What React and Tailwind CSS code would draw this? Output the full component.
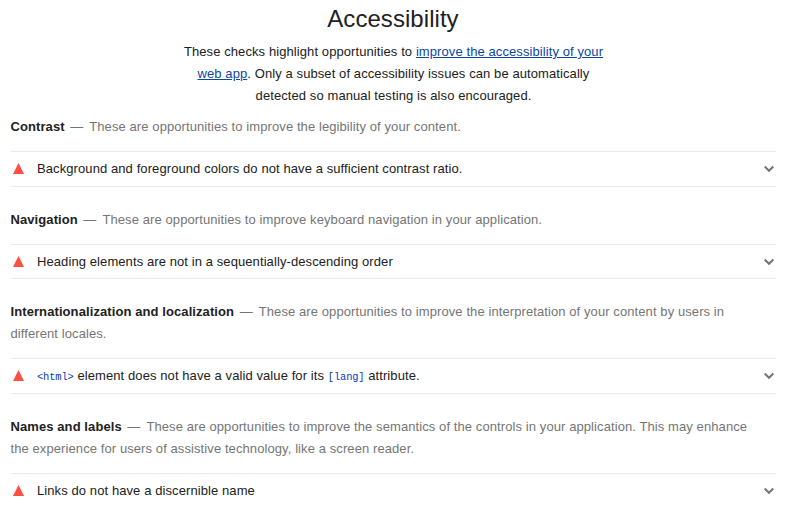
const sections = [
  { title: 'Contrast', desc: 'These are opportunities to improve the legibility of your content.', item: 'Background and foreground colors do not have a sufficient contrast ratio.', h: 'h-[36px]', mt: '' },
  { title: 'Navigation', desc: 'These are opportunities to improve keyboard navigation in your application.', item: 'Heading elements are not in a sequentially-descending order', h: 'h-[35px]', mt: 'mt-[22px]' },
  {
    title: 'Internationalization and localization',
    desc: 'These are opportunities to improve the interpretation of your content by users in different locales.',
    item: (
      <>
        <Code>{'<html>'}</Code> element does not have a valid value for its <Code>[lang]</Code> attribute.
      </>
    ),
    h: 'h-[36px]', mt: 'mt-[22px]',
  },
  { title: 'Names and labels', desc: 'These are opportunities to improve the semantics of the controls in your application. This may enhance the experience for users of assistive technology, like a screen reader.', item: 'Links do not have a discernible name', h: 'h-[36px]', mt: 'mt-[22px]' },
];

function Code({ children }) {
  return <code className="font-['Liberation_Mono',monospace] text-[10.4px] leading-none tracking-[-0.12px] text-[#0938c2]">{children}</code>;
}

function Section({ title, desc, item, h, mt }) {
  return (
    <section className={mt}>
      <p className="-ml-[0.5px] pr-[10px] text-[#757575]">
        <b className="text-[#212121]">{title}</b>
        <span className="ml-[5.5px] mr-[6px]">—</span>
        {desc}
      </p>
      <div className={`mt-[13px] flex items-center border-y border-[#ebebeb] ${h}`}>
        <svg className="mb-[1px] ml-[2px] mr-[13px] h-[11px] w-[11px]" viewBox="0 0 11 11">
          <path d="M5.5 0L11 11H0Z" fill="#ff4e42" />
        </svg>
        <span className="grow">{item}</span>
        <svg className="mr-[1px] h-[8px] w-[11px]" viewBox="0 0 11 8" fill="none" stroke="#757575" strokeWidth="2">
          <path d="M0.7 1.5L5 5.8L9.3 1.5" />
        </svg>
      </div>
    </section>
  );
}

export default function App() {
  return (
    <main className="h-[507px] w-[786px] overflow-hidden bg-white pl-[11px] pr-[10px] font-['Liberation_Sans',Arial,sans-serif] text-[13px] leading-[22px] tracking-[0.09px] text-[#212121]">
      <h1 className="-ml-[1px] pt-[3px] text-center text-[24px] leading-[32px] tracking-[0.05px]">Accessibility</h1>
      <p className="mx-auto mb-[9px] mt-[6px] w-[430px] text-center">
        These checks highlight opportunities to <a className="text-[#0d47a1] underline">improve the accessibility of your web app</a>. Only a subset of accessibility issues can be automatically detected so manual testing is also encouraged.
      </p>
      {sections.map((s) => (
        <Section key={s.title} {...s} />
      ))}
    </main>
  );
}
